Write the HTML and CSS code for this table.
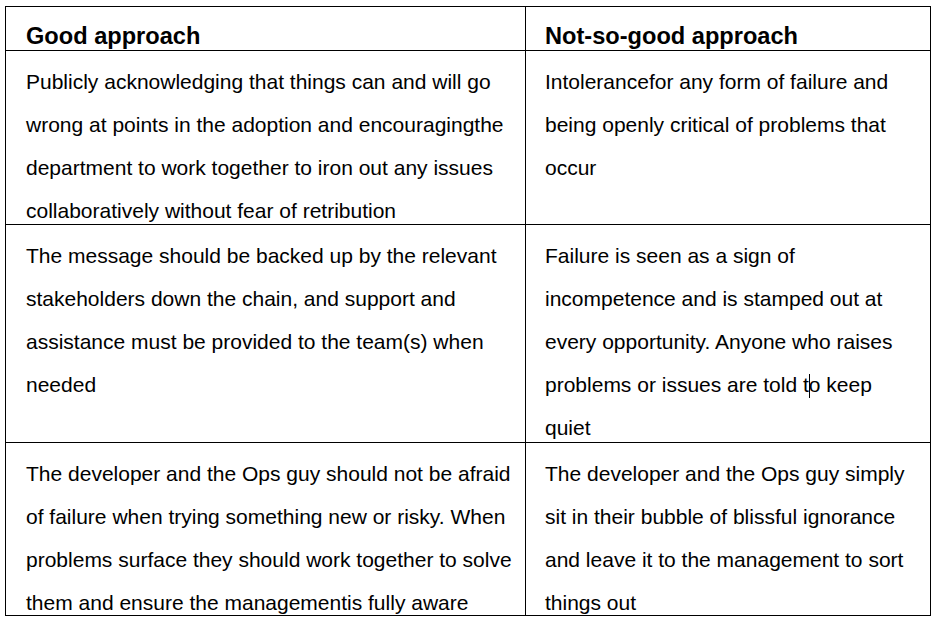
FILE: index.html
```html
<!DOCTYPE html>
<html>
<head>
<meta charset="utf-8">
<link rel="stylesheet" href="styles.css">
</head>
<body>
<table class="grid">
  <colgroup><col class="c1"><col class="c2"></colgroup>
  <tr class="head">
    <th><p>Good approach</p></th>
    <th><p>Not-so-good approach</p></th>
  </tr>
  <tr>
    <td><p>Publicly acknowledging that things can and will go<br>wrong at points in the adoption and encouragingthe<br>department to work together to iron out any issues<br>collaboratively without fear of retribution</p></td>
    <td><p>Intolerancefor any form of failure and<br>being openly critical of problems that<br>occur</p></td>
  </tr>
  <tr class="tall">
    <td><p>The message should be backed up by the relevant<br>stakeholders down the chain, and support and<br>assistance must be provided to the team(s) when<br>needed</p></td>
    <td><p>Failure is seen as a sign of<br>incompetence and is stamped out at<br>every opportunity. Anyone who raises<br>problems or issues are told t<span class="caret"></span>o keep<br>quiet</p></td>
  </tr>
  <tr class="last">
    <td><p>The developer and the Ops guy should not be afraid<br>of failure when trying something new or risky. When<br>problems surface they should work together to solve<br>them and ensure the managementis fully aware</p></td>
    <td><p>The developer and the Ops guy simply<br>sit in their bubble of blissful ignorance<br>and leave it to the management to sort<br>things out</p></td>
  </tr>
</table>
</body>
</html>
```

FILE: styles.css
```css
html, body {
  margin: 0;
  padding: 0;
  background: #fff;
}
body {
  padding: 6px 0 0 5px;
  font-family: "Liberation Sans", Arial, sans-serif;
  color: #000;
}
.grid {
  border-collapse: collapse;
  width: 925px;
  table-layout: fixed;
}
.c1 { width: 520px; }
.c2 { width: 405px; }
.grid th,
.grid td {
  border: 1px solid #000;
  padding: 9px 0 1px 20px;
  text-align: left;
  vertical-align: top;
}
.grid td:nth-child(2),
.grid th:nth-child(2) {
  padding-left: 19px;
}
.grid p {
  margin: 0 0 -9px 0;
  line-height: 43px;
  white-space: nowrap;
}
.grid .head th {
  padding-top: 8px;
  padding-bottom: 0;
}
.grid .head p {
  margin-bottom: -8px;
  font-size: 23.6px;
  font-weight: bold;
}
.grid td p {
  font-size: 21px;
  font-weight: normal;
}
.grid .tall td {
  padding-bottom: 2px;
}
.grid .last td {
  padding-bottom: 0;
}
.caret {
  display: inline-block;
  width: 1px;
  height: 24px;
  background: #000;
  margin-right: -1px;
  vertical-align: -6px;
}
```
